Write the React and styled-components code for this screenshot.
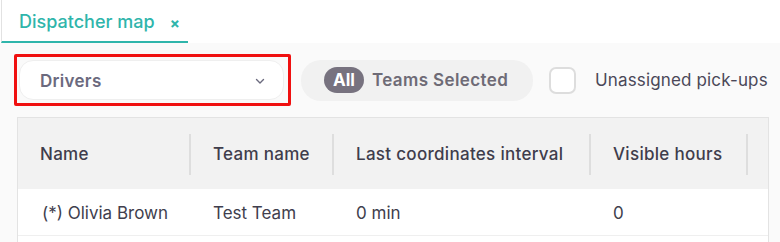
import React from "react";
import styled, { createGlobalStyle } from "styled-components";

const Global = createGlobalStyle`
  html, body { margin: 0; padding: 0; background: #fafafa; }
  body { font-family: Inter, "Noto Sans", sans-serif; color: #3f3d4c; }
  * { box-sizing: border-box; }
`;

const Page = styled.div`
  width: 780px;
  height: 242px;
  overflow: hidden;
  display: flex;
  flex-direction: column;
`;

const TabBar = styled.div`
  height: 43px;
  background: #fff;
  display: flex;
  align-items: stretch;
  padding-left: 1px;
`;

const Tab = styled.div`
  width: 187px;
  display: flex;
  align-items: center;
  padding: 1px 0 0 17px;
  border-left: 1px solid #e2e2e2;
  border-bottom: 2px solid #2fb5ab;
  color: #2fb5ab;
  font-size: 18px;
  font-weight: 500;
`;

const TabTitle = styled.span`
  flex: 1;
`;

const Close = styled.span`
  font-size: 15px;
  font-weight: 700;
  margin-right: 8px;
  margin-top: 4px;
`;

const Toolbar = styled.div`
  display: flex;
  align-items: center;
  padding: 11px 0 0 14px;
`;

const Highlight = styled.div`
  border: 3px solid #f01010;
  border-radius: 2px;
  padding: 3px 4px 3px 2px;
`;

const Select = styled.div`
  width: 265px;
  height: 40px;
  background: #fff;
  border: 1px solid #efefef;
  border-radius: 14px;
  display: flex;
  align-items: center;
  justify-content: space-between;
  padding: 1px 17px 0 20px;
  font-size: 17px;
  font-weight: 600;
  letter-spacing: 0.3px;
  color: #6b6a7e;
`;

const TeamsPill = styled.div`
  margin-left: 10px;
  height: 41px;
  width: 232px;
  background: #f1f1f1;
  border-radius: 20px;
  display: flex;
  align-items: center;
  padding-left: 23px;
  gap: 8px;
  font-size: 17px;
  font-weight: 600;
  letter-spacing: 0.4px;
  color: #6e6b76;
`;

const Badge = styled.span`
  background: #77727f;
  color: #fff;
  border-radius: 13px;
  height: 26px;
  padding: 0 9px;
  display: inline-flex;
  align-items: center;
  font-weight: 700;
  letter-spacing: 0;
`;

const CheckLabel = styled.label`
  margin-left: 16px;
  display: flex;
  align-items: center;
  gap: 19px;
  font-size: 17px;
  letter-spacing: 0.15px;
  color: #4a4858;
  white-space: nowrap;
`;

const Box = styled.span`
  width: 27px;
  height: 27px;
  border: 2px solid #dddddd;
  border-radius: 7px;
  background: #fff;
`;

const TableWrap = styled.div`
  margin: 11px 0 0 17px;
  width: 752px;
  border: 1px solid #e3e3e3;
  border-bottom: none;
  background: #fff;
  overflow: hidden;
  flex: 1;
`;

const Table = styled.div`
  display: grid;
  grid-template-columns: 173px 143px 257px 157px 160px;
  width: max-content;
`;

const Head = styled.div`
  position: relative;
  height: 71px;
  background: #f2f2f2;
  display: flex;
  align-items: center;
  padding-left: 22px;
  font-size: 17px;
  font-weight: 500;
  letter-spacing: 0.3px;
  color: #3f3d4c;
  white-space: nowrap;
  &::after {
    content: "";
    position: absolute;
    right: 0;
    top: 16px;
    bottom: 14px;
    width: 2px;
    background: ${(p) => (p.$last ? "transparent" : "#dedede")};
  }
`;

const Cell = styled.div`
  height: 47px;
  display: flex;
  align-items: center;
  padding: 1px 0 0 ${(p) => (p.$first ? "24px" : "22px")};
  font-size: 17px;
  color: #403e4d;
  border-bottom: 1px solid #efefef;
  white-space: nowrap;
`;

const Chevron = () => (
  <svg width="12" height="12" viewBox="0 0 12 12" fill="none">
    <path d="M2.5 4.5 L6 8 L9.5 4.5" stroke="#6b6a7e" strokeWidth="1.4" strokeLinecap="round" strokeLinejoin="round" />
  </svg>
);

export default function App() {
  const heads = ["Name", "Team name", "Last coordinates interval", "Visible hours", ""];
  const row = ["(*) Olivia Brown", "Test Team", "0 min", "0", ""];
  return (
    <Page>
      <Global />
      <TabBar>
        <Tab>
          <TabTitle>Dispatcher map</TabTitle>
          <Close>×</Close>
        </Tab>
      </TabBar>
      <Toolbar>
        <Highlight>
          <Select>
            Drivers
            <Chevron />
          </Select>
        </Highlight>
        <TeamsPill>
          <Badge>All</Badge>
          Teams Selected
        </TeamsPill>
        <CheckLabel>
          <Box />
          Unassigned pick-ups
        </CheckLabel>
      </Toolbar>
      <TableWrap>
        <Table>
          {heads.map((h, i) => (
            <Head key={i} $last={i === heads.length - 1}>{h}</Head>
          ))}
          {row.map((c, i) => (
            <Cell key={i} $first={i === 0}>{c}</Cell>
          ))}
        </Table>
      </TableWrap>
    </Page>
  );
}
